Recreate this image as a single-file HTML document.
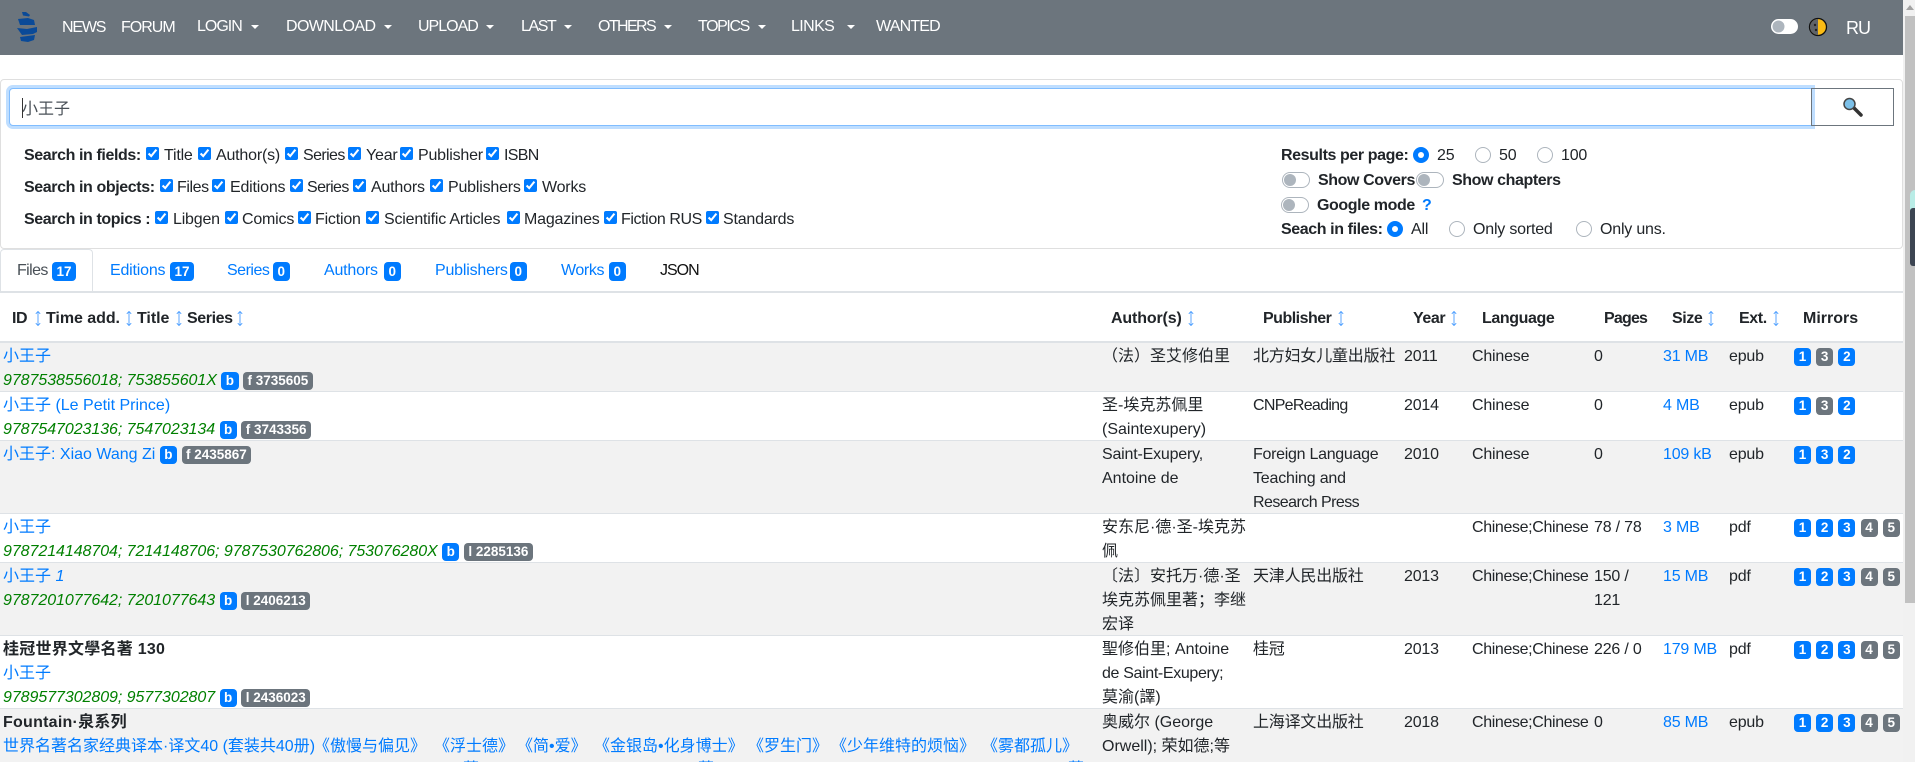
<!DOCTYPE html>
<html lang="en"><head><meta charset="utf-8"><title>Library search</title>
<style>
*{box-sizing:border-box}
html,body{margin:0;padding:0;width:1915px;height:762px;overflow:hidden;background:#fff}
body{position:relative;font:16px/24px "Liberation Sans","Noto Sans CJK SC",sans-serif;color:#212529;letter-spacing:-.2px;text-spacing-trim:space-all}
.a{position:absolute;white-space:nowrap}
b,.b{font-weight:700;letter-spacing:-.4px}
nav{position:absolute;left:0;top:0;width:1903px;height:55px;background:#6c757d}
nav .a{color:#fff;top:15px;letter-spacing:-.5px}
.car{position:absolute;top:25px;width:0;height:0;border-left:4.5px solid transparent;border-right:4.5px solid transparent;border-top:4.5px solid #fff}
.card{position:absolute;left:0;top:79px;width:1903px;height:170px;border:1px solid #dfdfdf;border-radius:4px}
.inp{position:absolute;left:9px;top:88px;width:1803px;height:38px;border:1px solid #80bdff;box-shadow:0 0 0 3px rgba(0,123,255,.25);border-radius:4px 0 0 4px;background:#fff}
.btn{position:absolute;left:1811px;top:88px;width:83px;height:38px;border:1px solid #6c757d}
input[type=checkbox]{position:absolute;margin:0;width:13px;height:13px;accent-color:#007bff}
.r{position:absolute;width:16px;height:16px;border-radius:50%;border:1px solid #adb5bd;background:#fff}
.r.on{background:#007bff;border:5px solid #007bff}
.r.on:after{content:"";display:block;width:6px;height:6px;margin:0;border-radius:50%;background:#fff}
.s{position:absolute;width:28px;height:16px;border:1px solid #adb5bd;border-radius:8px;background:#fff}
.s:after{content:"";position:absolute;left:1px;top:1px;width:12px;height:12px;border-radius:50%;background:#adb5bd}
.tab{position:absolute;left:0;top:249px;width:93px;height:42px;border:1px solid #dee2e6;border-bottom:0;border-radius:4px 4px 0 0;background:#fff}
.l{color:#007bff}
.bd{display:inline-block;font-size:13.5px;font-weight:700;line-height:1;padding:2.5px 4.5px;border-radius:4px;color:#fff;background:#007bff;vertical-align:baseline;letter-spacing:0;white-space:nowrap}
.g{background:#6c757d}
.ln{position:absolute;left:0;width:1903px;background:#dee2e6}
.ar{position:absolute;top:311px}
table{position:absolute;left:0;top:343px;width:1903px;border-collapse:collapse;table-layout:fixed}
td{padding:0;vertical-align:top;border-bottom:1px solid #dee2e6;white-space:nowrap;overflow:hidden}
td:before{content:"";display:block;height:2px}
td:after{content:"";display:block;margin-top:-2px}
td:first-child{padding-left:3px;letter-spacing:0}
td:nth-child(2){letter-spacing:0}
td b{letter-spacing:.25px}
tr.o{background:#f2f2f2}
i.n{color:green;letter-spacing:-.06px}
.lg{letter-spacing:-.36px}
.m .bd{width:17px;padding:2.5px 0;text-align:center;margin-right:5.2px}
.sb{position:absolute;left:1905px;top:16px;width:10px;height:587px;background:#c1c1c1}
.tt{top:735px;letter-spacing:0;color:#007bff}
</style></head><body>

<nav>
<svg class="a" style="left:0;top:0" width="56" height="55" viewBox="0 0 56 55"><g fill="#0a4a98"><path d="M22 12h4l4 3-1 1.500-6-1z"/><path d="M18 19l10-1 6 2 1 5H20z"/><path d="M17 28l10 1 10-2v5l-4 2-11 1z"/><path d="M20 37l15-2-1 5-6 2-7-1z"/></g></svg>
<span class="a" style="left:62px;top:16px;letter-spacing:-1.2px">NEWS</span>
<span class="a" style="left:121px;top:16px;letter-spacing:-1px">FORUM</span>
<span class="a" style="left:197px;letter-spacing:-1px">LOGIN</span><i class="car" style="left:251px"></i>
<span class="a" style="left:286px;letter-spacing:-.6px">DOWNLOAD</span><i class="car" style="left:384px"></i>
<span class="a" style="left:418px;letter-spacing:-1px">UPLOAD</span><i class="car" style="left:486px"></i>
<span class="a" style="left:521px;letter-spacing:-1.4px">LAST</span><i class="car" style="left:564px"></i>
<span class="a" style="left:598px;letter-spacing:-1.6px">OTHERS</span><i class="car" style="left:664px"></i>
<span class="a" style="left:698px;letter-spacing:-1.4px">TOPICS</span><i class="car" style="left:758px"></i>
<span class="a" style="left:791px;letter-spacing:-.6px">LINKS</span><i class="car" style="left:847px"></i>
<span class="a" style="left:876px;letter-spacing:-.8px">WANTED</span>
<svg class="a" style="left:1770px;top:17px" width="60" height="22" viewBox="0 0 60 22"><rect x="1" y="2" width="27" height="15" rx="7.500" fill="#fff"/><circle cx="8.500" cy="9.500" r="6" fill="#adb5bd"/><circle cx="48" cy="10" r="8.500" fill="#fbbc15" stroke="#111" stroke-width="1.300"/><path d="M48 2a8 8 0 0 0 0 16z" fill="#5f6368"/><circle cx="45" cy="8" r="1.200" fill="#222"/><circle cx="46" cy="13" r="1.200" fill="#222"/></svg>
<span class="a" style="left:1846px;top:16px;font-size:18px;letter-spacing:-1px">RU</span>
</nav>

<div class="card"></div>
<div class="inp"></div>
<div class="btn"></div>
<span class="a" style="left:22px;top:98px;color:#495057;letter-spacing:0">小王子</span>
<i class="a" style="left:22px;top:98px;width:1px;height:20px;background:#333"></i>
<svg class="a" style="left:1841px;top:96px" width="24" height="22" viewBox="0 0 24 22"><path d="M13 12l7 7" stroke="#333" stroke-width="3.500" stroke-linecap="round"/><circle cx="8.500" cy="8" r="5.500" fill="#7cc0e8" stroke="#444" stroke-width="1.500"/></svg>

<!-- left form -->
<span class="a b" style="left:24px;top:144px">Search in fields:</span>
<input type="checkbox" checked style="left:146px;top:147px"><span class="a" style="left:164px;top:144px">Title</span>
<input type="checkbox" checked style="left:198px;top:147px"><span class="a" style="left:216px;top:144px">Author(s)</span>
<input type="checkbox" checked style="left:285px;top:147px"><span class="a" style="left:303px;top:144px;letter-spacing:-.6px">Series</span>
<input type="checkbox" checked style="left:348px;top:147px"><span class="a" style="left:366px;top:144px">Year</span>
<input type="checkbox" checked style="left:400px;top:147px"><span class="a" style="left:418px;top:144px">Publisher</span>
<input type="checkbox" checked style="left:486px;top:147px"><span class="a" style="left:504px;top:144px;letter-spacing:-.7px">ISBN</span>

<span class="a b" style="left:24px;top:176px">Search in objects:</span>
<input type="checkbox" checked style="left:160px;top:179px"><span class="a" style="left:177px;top:176px;letter-spacing:-.4px">Files</span>
<input type="checkbox" checked style="left:212px;top:179px"><span class="a" style="left:230px;top:176px">Editions</span>
<input type="checkbox" checked style="left:290px;top:179px"><span class="a" style="left:307px;top:176px;letter-spacing:-.6px">Series</span>
<input type="checkbox" checked style="left:353px;top:179px"><span class="a" style="left:371px;top:176px">Authors</span>
<input type="checkbox" checked style="left:430px;top:179px"><span class="a" style="left:448px;top:176px">Publishers</span>
<input type="checkbox" checked style="left:524px;top:179px"><span class="a" style="left:542px;top:176px">Works</span>

<span class="a b" style="left:24px;top:208px">Search in topics :</span>
<input type="checkbox" checked style="left:155px;top:211px"><span class="a" style="left:173px;top:208px">Libgen</span>
<input type="checkbox" checked style="left:225px;top:211px"><span class="a" style="left:242px;top:208px">Comics</span>
<input type="checkbox" checked style="left:298px;top:211px"><span class="a" style="left:315px;top:208px">Fiction</span>
<input type="checkbox" checked style="left:366px;top:211px"><span class="a" style="left:384px;top:208px">Scientific Articles</span>
<input type="checkbox" checked style="left:507px;top:211px"><span class="a" style="left:524px;top:208px">Magazines</span>
<input type="checkbox" checked style="left:604px;top:211px"><span class="a" style="left:621px;top:208px;letter-spacing:-.4px">Fiction RUS</span>
<input type="checkbox" checked style="left:706px;top:211px"><span class="a" style="left:723px;top:208px">Standards</span>

<!-- right form -->
<span class="a b" style="left:1281px;top:144px">Results per page:</span>
<i class="r on" style="left:1413px;top:147px"></i><span class="a" style="left:1437px;top:144px">25</span>
<i class="r" style="left:1475px;top:147px"></i><span class="a" style="left:1499px;top:144px">50</span>
<i class="r" style="left:1537px;top:147px"></i><span class="a" style="left:1561px;top:144px">100</span>
<i class="s" style="left:1282px;top:172px"></i><span class="a b" style="left:1318px;top:169px">Show Covers</span>
<i class="s" style="left:1416px;top:172px"></i><span class="a b" style="left:1452px;top:169px">Show chapters</span>
<i class="s" style="left:1281px;top:197px"></i><span class="a b" style="left:1317px;top:194px">Google mode</span><span class="a b l" style="left:1422px;top:194px">?</span>
<span class="a b" style="left:1281px;top:218px">Seach in files:</span>
<i class="r on" style="left:1387px;top:221px"></i><span class="a" style="left:1411px;top:218px">All</span>
<i class="r" style="left:1449px;top:221px"></i><span class="a" style="left:1473px;top:218px">Only sorted</span>
<i class="r" style="left:1576px;top:221px"></i><span class="a" style="left:1600px;top:218px">Only uns.</span>

<!-- tabs -->
<div class="tab"></div>
<span class="a" style="left:17px;top:259px;color:#495057;letter-spacing:-.6px">Files</span><span class="a bd" style="left:52px;top:262px">17</span>
<span class="a l" style="left:110px;top:259px">Editions</span><span class="a bd" style="left:170px;top:262px">17</span>
<span class="a l" style="left:227px;top:259px;letter-spacing:-.5px">Series</span><span class="a bd" style="left:273px;top:262px">0</span>
<span class="a l" style="left:324px;top:259px">Authors</span><span class="a bd" style="left:384px;top:262px">0</span>
<span class="a l" style="left:435px;top:259px">Publishers</span><span class="a bd" style="left:510px;top:262px">0</span>
<span class="a l" style="left:561px;top:259px;letter-spacing:-.4px">Works</span><span class="a bd" style="left:609px;top:262px">0</span>
<span class="a" style="left:660px;top:259px;color:#111;letter-spacing:-1px">JSON</span>
<div class="ln" style="top:291px;height:2px"></div>

<!-- header -->
<b class="a" style="left:12px;top:307px">ID</b>
<b class="a" style="left:46px;top:307px;letter-spacing:-.05px">Time add.</b>
<b class="a" style="left:137px;top:307px;letter-spacing:-.05px">Title</b>
<b class="a" style="left:187px;top:307px">Series</b>
<b class="a" style="left:1111px;top:307px;letter-spacing:-.15px">Author(s)</b>
<b class="a" style="left:1263px;top:307px;letter-spacing:-.5px">Publisher</b>
<b class="a" style="left:1413px;top:307px">Year</b>
<b class="a" style="left:1482px;top:307px">Language</b>
<b class="a" style="left:1604px;top:307px;letter-spacing:-.8px">Pages</b>
<b class="a" style="left:1672px;top:307px">Size</b>
<b class="a" style="left:1739px;top:307px">Ext.</b>
<b class="a" style="left:1803px;top:307px;letter-spacing:0">Mirrors</b>
<svg class="ar" style="left:35px" width="6" height="15" viewBox="0 0 6 15"><path d="M3 .5v14M.8 2.800L3 .5l2.200 2.300M.8 12.200L3 14.500l2.200-2.300" fill="none" stroke="#4a9dff" stroke-width=".9"/></svg>
<svg class="ar" style="left:126px" width="6" height="15" viewBox="0 0 6 15"><path d="M3 .5v14M.8 2.800L3 .5l2.200 2.300M.8 12.200L3 14.500l2.200-2.300" fill="none" stroke="#4a9dff" stroke-width=".9"/></svg>
<svg class="ar" style="left:176px" width="6" height="15" viewBox="0 0 6 15"><path d="M3 .5v14M.8 2.800L3 .5l2.200 2.300M.8 12.200L3 14.500l2.200-2.300" fill="none" stroke="#4a9dff" stroke-width=".9"/></svg>
<svg class="ar" style="left:237px" width="6" height="15" viewBox="0 0 6 15"><path d="M3 .5v14M.8 2.800L3 .5l2.200 2.300M.8 12.200L3 14.500l2.200-2.300" fill="none" stroke="#4a9dff" stroke-width=".9"/></svg>
<svg class="ar" style="left:1188px" width="6" height="15" viewBox="0 0 6 15"><path d="M3 .5v14M.8 2.800L3 .5l2.200 2.300M.8 12.200L3 14.500l2.200-2.300" fill="none" stroke="#4a9dff" stroke-width=".9"/></svg>
<svg class="ar" style="left:1338px" width="6" height="15" viewBox="0 0 6 15"><path d="M3 .5v14M.8 2.800L3 .5l2.200 2.300M.8 12.200L3 14.500l2.200-2.300" fill="none" stroke="#4a9dff" stroke-width=".9"/></svg>
<svg class="ar" style="left:1451px" width="6" height="15" viewBox="0 0 6 15"><path d="M3 .5v14M.8 2.800L3 .5l2.200 2.300M.8 12.200L3 14.500l2.200-2.300" fill="none" stroke="#4a9dff" stroke-width=".9"/></svg>
<svg class="ar" style="left:1708px" width="6" height="15" viewBox="0 0 6 15"><path d="M3 .5v14M.8 2.800L3 .5l2.200 2.300M.8 12.200L3 14.500l2.200-2.300" fill="none" stroke="#4a9dff" stroke-width=".9"/></svg>
<svg class="ar" style="left:1773px" width="6" height="15" viewBox="0 0 6 15"><path d="M3 .5v14M.8 2.800L3 .5l2.200 2.300M.8 12.200L3 14.500l2.200-2.300" fill="none" stroke="#4a9dff" stroke-width=".9"/></svg>
<div class="ln" style="top:341px;height:2px"></div>

<table>
<colgroup><col style="width:1102px"><col style="width:151px"><col style="width:151px"><col style="width:68px"><col style="width:122px"><col style="width:69px"><col style="width:66px"><col style="width:65px"><col style="width:109px"></colgroup>
<tr class="o"><td><span class="l">小王子</span><br><i class="n">9787538556018; 753855601X</i> <span class="bd">b</span> <span class="bd g">f 3735605</span></td><td>（法）圣艾修伯里<br>&nbsp;</td><td>北方妇女儿童出版社</td><td>2011</td><td>Chinese</td><td>0</td><td class="l">31 MB</td><td>epub</td><td class="m"><span class="bd">1</span><span class="bd g">3</span><span class="bd">2</span></td></tr>
<tr><td><span class="l">小王子 (Le Petit Prince)</span><br><i class="n">9787547023136; 7547023134</i> <span class="bd">b</span> <span class="bd g">f 3743356</span></td><td>圣-埃克苏佩里<br>(Saintexupery)</td><td><span style="letter-spacing:-.7px">CNPeReading</span></td><td>2014</td><td>Chinese</td><td>0</td><td class="l">4 MB</td><td>epub</td><td class="m"><span class="bd">1</span><span class="bd g">3</span><span class="bd">2</span></td></tr>
<tr class="o"><td><span class="l">小王子: Xiao Wang Zi</span> <span class="bd">b</span> <span class="bd g">f 2435867</span></td><td><span style="letter-spacing:-.2px">Saint-Exupery,</span><br>Antoine de</td><td><span style="letter-spacing:-.28px">Foreign Language</span><br>Teaching and<br><span style="letter-spacing:-.55px">Research Press</span></td><td>2010</td><td>Chinese</td><td>0</td><td class="l">109 kB</td><td>epub</td><td class="m"><span class="bd">1</span><span class="bd">3</span><span class="bd">2</span></td></tr>
<tr><td><span class="l">小王子</span><br><i class="n">9787214148704; 7214148706; 9787530762806; 753076280X</i> <span class="bd">b</span> <span class="bd g">l 2285136</span></td><td>安东尼·德·圣-埃克苏<br>佩</td><td></td><td></td><td class="lg">Chinese;Chinese</td><td>78 / 78</td><td class="l">3 MB</td><td>pdf</td><td class="m"><span class="bd">1</span><span class="bd">2</span><span class="bd">3</span><span class="bd g">4</span><span class="bd g">5</span></td></tr>
<tr class="o"><td><span class="l">小王子 <i>1</i></span><br><i class="n">9787201077642; 7201077643</i> <span class="bd">b</span> <span class="bd g">l 2406213</span></td><td>〔法〕安托万·德·圣<br>埃克苏佩里著；李继<br>宏译</td><td>天津人民出版社</td><td>2013</td><td class="lg">Chinese;Chinese</td><td>150 /<br>121</td><td class="l">15 MB</td><td>pdf</td><td class="m"><span class="bd">1</span><span class="bd">2</span><span class="bd">3</span><span class="bd g">4</span><span class="bd g">5</span></td></tr>
<tr><td><b>桂冠世界文學名著 130</b><br><span class="l">小王子</span><br><i class="n">9789577302809; 9577302807</i> <span class="bd">b</span> <span class="bd g">l 2436023</span></td><td>聖修伯里; Antoine<br><span style="letter-spacing:-.35px">de Saint-Exupery;</span><br>莫渝(譯)</td><td>桂冠</td><td>2013</td><td class="lg">Chinese;Chinese</td><td>226 / 0</td><td class="l">179 MB</td><td>pdf</td><td class="m"><span class="bd">1</span><span class="bd">2</span><span class="bd">3</span><span class="bd g">4</span><span class="bd g">5</span></td></tr>
<tr class="o"><td><b>Fountain·泉系列</b><br><span class="l">世界名著名家经典译本·译文40 (套装共40册)</span><br>&nbsp;</td><td>奥威尔 (George<br>Orwell); 荣如德;等</td><td>上海译文出版社</td><td>2018</td><td class="lg">Chinese;Chinese</td><td>0</td><td class="l">85 MB</td><td>epub</td><td class="m"><span class="bd">1</span><span class="bd">2</span><span class="bd">3</span><span class="bd g">4</span><span class="bd g">5</span></td></tr>
</table>
<span class="a tt" style="left:314px">《傲慢与偏见》</span>
<span class="a tt" style="left:434px">《浮士德》</span>
<span class="a tt" style="left:517px">《简•爱》</span>
<span class="a tt" style="left:594px">《金银岛•化身博士》</span>
<span class="a tt" style="left:748px">《罗生门》</span>
<span class="a tt" style="left:831px">《少年维特的烦恼》</span>
<span class="a tt" style="left:982px">《雾都孤儿》</span>
<span class="a l" style="left:463px;top:758px;letter-spacing:0">著</span>
<span class="a l" style="left:698px;top:758px;letter-spacing:0">著</span>
<span class="a l" style="left:1068px;top:758px;letter-spacing:0">著</span>

<!-- scrollbar -->
<div class="a" style="left:1903px;top:0;width:12px;height:762px;background:#f1f1f1"></div>
<div class="sb"></div>
<i class="car" style="left:1906px;top:5px;border-top:0;border-bottom:5px solid #a3a3a3"></i>
<div class="a" style="left:1910px;top:190px;width:5px;height:20px;background:#b9ece6;border-radius:5px 0 0 0"></div>
<div class="a" style="left:1910px;top:208px;width:5px;height:58px;background:#3c4552;border-radius:3px 0 0 3px"></div>
</body></html>
